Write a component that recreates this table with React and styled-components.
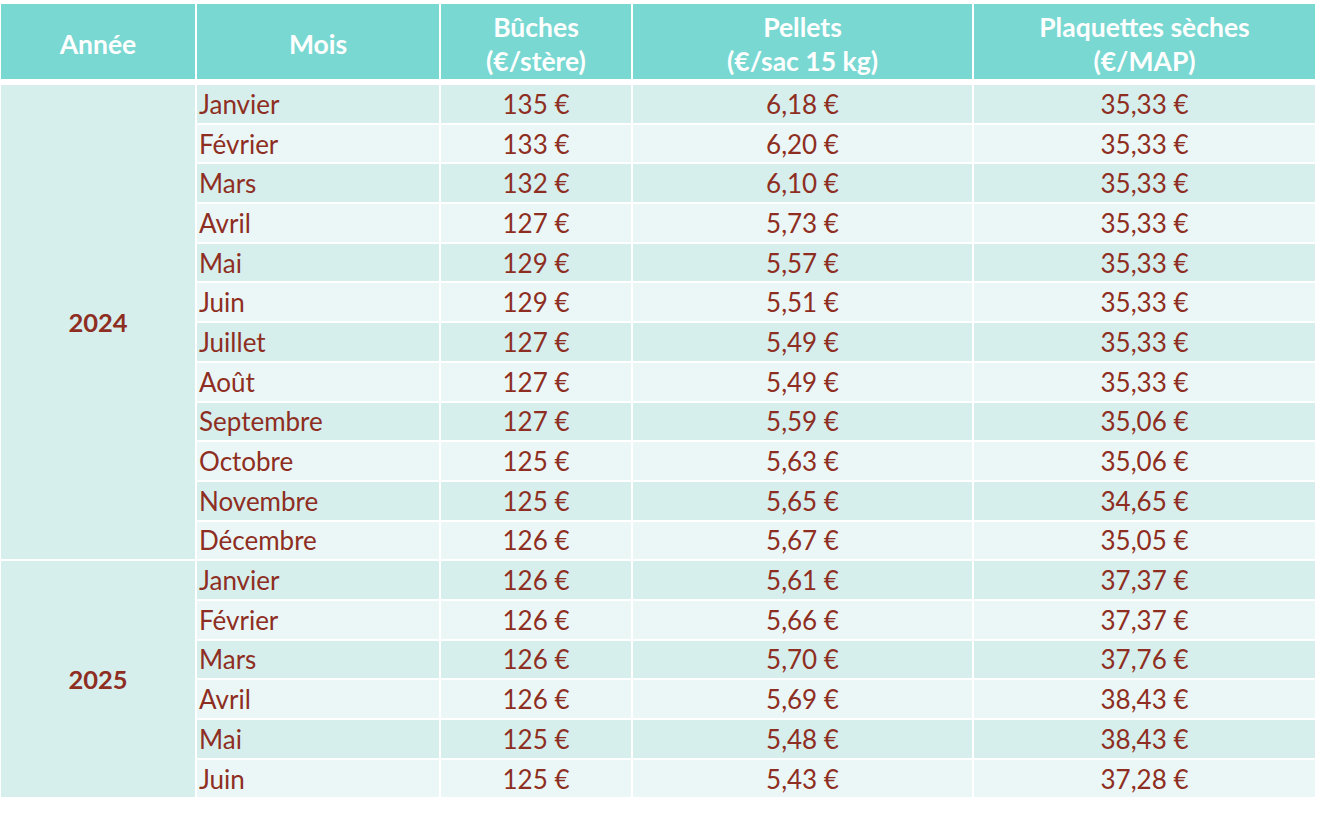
import React from "react";
import styled, { createGlobalStyle } from "styled-components";

const Global = createGlobalStyle`
  html, body { margin: 0; padding: 0; background: #ffffff; }
  body { font-family: Lato, "Open Sans", "Liberation Sans", sans-serif; }
`;

const Table = styled.table`
  border-collapse: separate;
  border-spacing: 2px;
  table-layout: fixed;
  width: 1318px;
  margin: 2px 0 0 -1px;
  font-family: Lato, "Open Sans", "Liberation Sans", sans-serif;
`;

const Th = styled.th`
  background: #79d8d2;
  color: #ffffff;
  font-weight: 700;
  font-size: 26.5px;
  line-height: 34px;
  height: 71px;
  padding: 4px 0 0;
  text-align: center;
  vertical-align: middle;
  border-bottom: 4px solid #ffffff;
`;

const Td = styled.td`
  background: ${(p) => (p.$alt ? "#ebf7f6" : "#d6efed")};
  color: #8e2e22;
  font-size: 26px;
  height: 37.7px;
  padding: ${(p) => (p.$left ? "0 0 0 2px" : "0")};
  text-align: ${(p) => (p.$left ? "left" : "center")};
  vertical-align: middle;
  line-height: 1;
  white-space: nowrap;
`;

const YearCell = styled.td`
  background: #d6efed;
  color: #8e2e22;
  font-weight: 700;
  font-size: 25.5px;
  text-align: center;
  vertical-align: middle;
  padding: 0;
`;

const data = [
  {
    year: "2024",
    rows: [
      ["Janvier", "135 €", "6,18 €", "35,33 €"],
      ["Février", "133 €", "6,20 €", "35,33 €"],
      ["Mars", "132 €", "6,10 €", "35,33 €"],
      ["Avril", "127 €", "5,73 €", "35,33 €"],
      ["Mai", "129 €", "5,57 €", "35,33 €"],
      ["Juin", "129 €", "5,51 €", "35,33 €"],
      ["Juillet", "127 €", "5,49 €", "35,33 €"],
      ["Août", "127 €", "5,49 €", "35,33 €"],
      ["Septembre", "127 €", "5,59 €", "35,06 €"],
      ["Octobre", "125 €", "5,63 €", "35,06 €"],
      ["Novembre", "125 €", "5,65 €", "34,65 €"],
      ["Décembre", "126 €", "5,67 €", "35,05 €"],
    ],
  },
  {
    year: "2025",
    rows: [
      ["Janvier", "126 €", "5,61 €", "37,37 €"],
      ["Février", "126 €", "5,66 €", "37,37 €"],
      ["Mars", "126 €", "5,70 €", "37,76 €"],
      ["Avril", "126 €", "5,69 €", "38,43 €"],
      ["Mai", "125 €", "5,48 €", "38,43 €"],
      ["Juin", "125 €", "5,43 €", "37,28 €"],
    ],
  },
];

export default function App() {
  return (
    <>
      <Global />
      <Table>
        <colgroup>
          <col style={{ width: 194 }} />
          <col style={{ width: 242 }} />
          <col style={{ width: 190 }} />
          <col style={{ width: 339 }} />
          <col style={{ width: 341 }} />
        </colgroup>
        <thead>
          <tr>
            <Th>Année</Th>
            <Th>Mois</Th>
            <Th>
              Bûches
              <br />
              (€/stère)
            </Th>
            <Th>
              Pellets
              <br />
              (€/sac 15 kg)
            </Th>
            <Th>
              Plaquettes sèches
              <br />
              (€/MAP)
            </Th>
          </tr>
        </thead>
        <tbody>
          {data.map((g) =>
            g.rows.map((r, i) => (
              <tr key={g.year + r[0]}>
                {i === 0 && <YearCell rowSpan={g.rows.length}>{g.year}</YearCell>}
                <Td $left $alt={i % 2 === 1}>{r[0]}</Td>
                <Td $alt={i % 2 === 1}>{r[1]}</Td>
                <Td $alt={i % 2 === 1}>{r[2]}</Td>
                <Td $alt={i % 2 === 1}>{r[3]}</Td>
              </tr>
            ))
          )}
        </tbody>
      </Table>
    </>
  );
}
